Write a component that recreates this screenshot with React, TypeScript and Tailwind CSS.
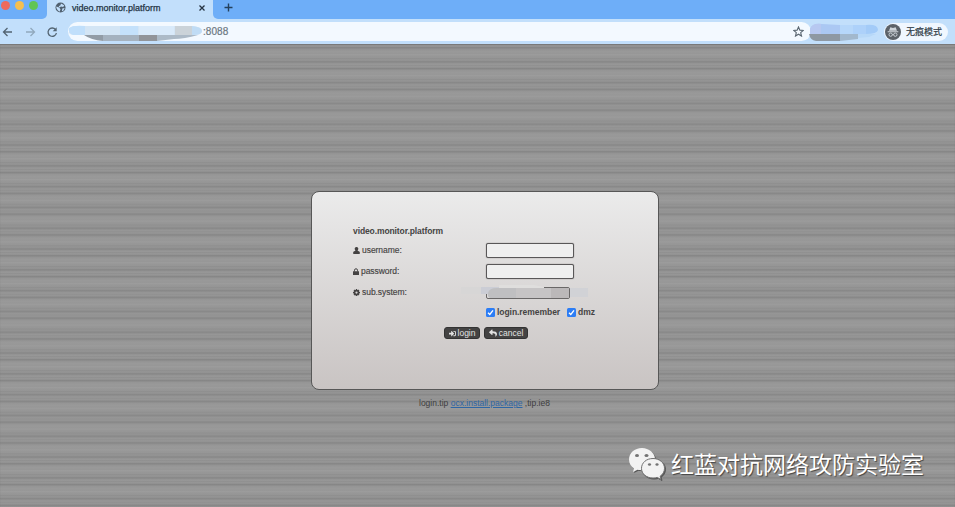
import React from 'react';
import { FaSignInAlt, FaReply } from 'react-icons/fa';

const brushed =
  'bg-[repeating-linear-gradient(180deg,#8b8b8b_0px,#949494_1px,#979797_2px,#909090_3px,#969696_4px,#929292_5px,#868686_6px,#8d8d8d_7px,#959595_8px,#999999_10px,#979797_12px,#9c9c9c_13px,#979797_14.5px,#969696_16px,#8f8f8f_17px,#949494_18px,#929292_19px,#888888_20px,#8b8b8b_20.8px)]';

function BrowserChrome() {
  return (
    <header className="h-[44px] bg-[#c2dffb]">
      <div className="flex h-[19px] bg-[#6eaef8]">
        <div className="flex w-[47px] items-start bg-[#c2dffb]">
          <div className="flex h-[19px] w-full gap-[5px] rounded-br-[5px] bg-[#6eaef8] pt-[1px] pl-[1px]">
            <i className="size-[9px] rounded-full bg-[#ed6a5e]" />
            <i className="size-[9px] rounded-full bg-[#f5bf4f]" />
            <i className="size-[9px] rounded-full bg-[#61c554]" />
          </div>
        </div>
        <div className="flex w-[166px] items-center bg-[#c2dffb] pl-[8px] pb-[4px]">
          <svg className="size-[11px] shrink-0" viewBox="0 0 24 24">
            <circle cx="12" cy="12" r="11" fill="#50606f" />
            <path d="M3 10l6 2 3 4-2 5-4-3-3-5zM13 3l7 4-2 4-5-1-3 2-2-3 4-2zM16 14l5-1-3 6-3 1z" fill="#c2dffb" />
          </svg>
          <span className="ml-[6px] w-[127px] text-[9px] leading-[12px] whitespace-nowrap text-[#243444] [-webkit-text-stroke:0.25px_#243444]">video.monitor.platform</span>
          <svg className="size-[6px] shrink-0" viewBox="0 0 6 6"><path d="M.5 .5l5 5M5.500 .5l-5 5" stroke="#263442" strokeWidth="1.300" /></svg>
        </div>
        <div className="flex flex-1 bg-[#c2dffb]">
          <div className="flex-1 rounded-bl-[5px] bg-[#6eaef8] pt-[3px] pl-[11px]">
            <svg className="size-[9px]" viewBox="0 0 9 9"><path d="M4.500 .5v8M.5 4.500h8" stroke="#24405c" strokeWidth="1.400" /></svg>
          </div>
        </div>
      </div>
      <div className="flex h-[25px] items-center">
        <svg className="h-[12px] w-[62px] shrink-0" viewBox="0 0 62 12" fill="none" strokeWidth="1.300">
          <path d="M12 6H3.500M7.500 2l-4 4 4 4" stroke="#536472" />
          <path d="M26 6h8.500M30.500 2l4 4-4 4" stroke="#91a9bd" />
          <path d="M55.500 3.500A4.200 4.200 0 1 0 56.400 7" stroke="#536472" />
          <path d="M56.700 1.200v4h-4z" fill="#536472" />
        </svg>
        <div className="ml-[6px] flex h-[19px] w-[743px] items-center rounded-full bg-[#f3f9ff]">
          <svg className="h-[19px] w-[135px] shrink-0" viewBox="0 0 135 19">
            <path d="M5 4H121Q134 4 134 9T123 13H5Q0 12 1 9T5 4" fill="#d3e5f5" />
            <path d="M52 4h18v9H52z" fill="#c4e1fb" />
            <path d="M71 4h35v9H71z" fill="#d9eafa" />
            <path d="M107 4h17v9h-17z" fill="#cbd3d9" />
            <path d="M124 4q10 1 10 5t-10 4z" fill="#c0dcf5" />
            <path d="M1 6q4-3 16-2v9H5Q0 11 1 6z" fill="#c0dffb" />
            <path d="M16 13h19v6Q23 18 16 13z" fill="#929ca6" />
            <path d="M35 13h36v6H35z" fill="#a5b2bf" />
            <path d="M71 13h18v6H71z" fill="#919499" />
            <path d="M89 13h41q-14 4-24 4l-17 2z" fill="#acbac7" />
          </svg>
          <span className="w-[590px] text-[10px] leading-[12px] tracking-[0.05px] text-[#6b7781] [-webkit-text-stroke:0.2px_#6b7781]">:8088</span>
          <svg className="size-[11px]" viewBox="0 0 24 24" fill="none" stroke="#5b6772" strokeWidth="2.400"><path d="M12 2l3 7 7.500.6-5.700 5 1.800 7.400-6.600-4-6.600 4 1.800-7.400-5.700-5L9 9z" /></svg>
        </div>
        <svg className="-ml-[2px] h-[19px] w-[72px] shrink-0" viewBox="0 0 72 19">
          <path d="M1 7q2-6 12-5l18 1v9H1z" fill="#abc8f3" />
          <path d="M1 7q2-6 11-5v10H1z" fill="#b7c8f1" />
          <path d="M31 3h13v9H31z" fill="#b6d7fa" />
          <path d="M44 3h13v9H44z" fill="#add1fa" />
          <path d="M57 3q12-1 12 5-1 4-12 4z" fill="#a3cbf8" />
          <path d="M0 12h31v7H7q-6-1-7-7" fill="#8e98a3" />
          <path d="M31 12h18v5l-18 2z" fill="#a2b8cd" />
          <path d="M49 12h18l-7 3-11 1z" fill="#b7d8f8" />
        </svg>
        <div className="ml-[3px] flex h-[18px] w-[64px] shrink-0 items-center rounded-full bg-[#f0f7ff] pl-[1px]">
          <svg className="size-[16px] shrink-0" viewBox="0 0 24 24">
            <circle cx="12" cy="12" r="12" fill="#5c6269" />
            <path d="M8 5l4 1 4-1 2 5H6zM4 11h16v1.500H4z" fill="#cfd5da" />
            <g fill="none" stroke="#cfd5da" strokeWidth="1.400"><circle cx="8.500" cy="16" r="2.500" /><circle cx="15.500" cy="16" r="2.500" /><path d="M11 16h2" /></g>
          </svg>
          <span className="ml-[5px] text-[9px] leading-[12px] whitespace-nowrap text-[#303b46] [-webkit-text-stroke:0.2px_#303b46]">无痕模式</span>
        </div>
      </div>
    </header>
  );
}

function Check({ label }: { label: string }) {
  return (
    <label className="flex items-center gap-[2px] text-[8.500px] font-bold tracking-[-0.05px] text-[#454343]">
      <svg className="size-[9px]" viewBox="0 0 9 9"><rect width="9" height="9" rx="1.500" fill="#2c7df5" /><path d="M2 4.700l1.800 1.800L7 2.400" fill="none" stroke="#fff" strokeWidth="1.300" /></svg>
      <span>{label}</span>
    </label>
  );
}

function LoginPanel() {
  const input = 'h-[15px] w-[88px] rounded-[2px] border border-[#595758] bg-[#efefef] shadow-[0_0_1px_#595758] outline-none';
  const label = 'flex w-[133px] items-center gap-[2px] text-[8.500px] tracking-[-0.05px] text-[#454343] [-webkit-text-stroke:0.15px_#454343]';
  return (
    <form className="mt-[147px] ml-[311px] h-[199px] w-[348px] rounded-[8px] border border-[#575757] bg-linear-to-b from-[#ebebeb] to-[#c9c4c3] pt-[34px] pl-[41px]">
      <h1 className="h-[14px] text-[8.500px] leading-[11px] font-bold tracking-[-0.1px] text-[#454343]">video.monitor.platform</h1>
      <div className="flex h-[21px] items-center">
        <label className={label}>
          <svg className="size-[7px]" viewBox="0 0 14 14" fill="currentColor"><path d="M7 0a3.500 3.500 0 0 1 3 5.500Q9.500 7 9 7.500q5 1 5 4.500 0 2-2 2H2q-2 0-2-2 0-3.500 5-4.500-.5-.5-1-2A3.500 3.500 0 0 1 7 0z" /></svg>
          username:
        </label>
        <input className={input} />
      </div>
      <div className="flex h-[21px] items-center">
        <label className={label}>
          <svg className="h-[7px] w-[6px]" viewBox="0 0 12 14" fill="currentColor"><path d="M0 6.500h12V14H0z" /><path d="M3 7V4.500a3 3 0 0 1 6 0V7" fill="none" stroke="currentColor" strokeWidth="2" /></svg>
          password:
        </label>
        <input type="password" className={input} />
      </div>
      <div className="flex h-[20px] items-center">
        <label className="flex w-[103px] items-center gap-[2px] text-[8.500px] tracking-[-0.05px] text-[#454343] [-webkit-text-stroke:0.15px_#454343]">
          <svg className="size-[7px]" viewBox="0 0 14 14" fill="none" stroke="currentColor"><circle cx="7" cy="7" r="4" strokeWidth="3.500" /><path d="M7 0v2M7 12v2M0 7h2M12 7h2M2 2l2 2M10 10l2 2M2 12l2-2M10 4l2-2" strokeWidth="2.500" /></svg>
          sub.system:
        </label>
        <svg className="h-[17px] w-[140px]" viewBox="0 0 140 17">
          <rect x="30.500" y="3.500" width="83" height="11" rx="1.500" fill="#dedcdc" stroke="#696767" />
          <path d="M5 3h20v7H5z" fill="#d7d6d6" />
          <path d="M25 3h19v7H25z" fill="#cbcdd5" />
          <path d="M43 1h35l10 2v2H43z" fill="#dfdedd" />
          <path d="M32 9q1-5 9-5h19v10H34q-3-1-2-5z" fill="#bfbfc1" />
          <path d="M60 4h35v10H60z" fill="#c6c4c5" />
          <path d="M95 4h18v10H95z" fill="#bbb8b9" />
          <path d="M114 4h18v9h-18z" fill="#d1d2d6" />
        </svg>
      </div>
      <div className="ml-[133px] flex h-[20px] items-center gap-[7px]">
        <Check label="login.remember" /><Check label="dmz" />
      </div>
      <div className="ml-[91px] flex h-[22px] items-center gap-[4px] text-[8.500px] leading-[12px] text-[#e2e2e2]">
        <button type="button" className="flex h-[12px] w-[36px] items-center justify-center gap-[2px] rounded-[3px] border border-[#333] bg-[#444343]"><FaSignInAlt className="size-[7px]" />login</button>
        <button type="button" className="flex h-[12px] w-[44px] items-center justify-center gap-[2px] rounded-[3px] border border-[#333] bg-[#444343]"><FaReply className="size-[8px]" />cancel</button>
      </div>
    </form>
  );
}

function Watermark() {
  return (
    <div className="mt-[37px] ml-[628px] flex h-[36px] items-center gap-[5px] text-white">
      <svg className="h-[34px] w-[38px] shrink-0 drop-shadow-[1px_1px_0px_#555]" viewBox="0 0 38 34">
        <path d="M14 1C6.500 1 1 6 1 12.500c0 4 2 7 5 9L5 25l4.500-2.200c2 .5 3 .6 5 .6C21 23 27 18 27 12S21 1 14 1z" fill="#f2f2f2" />
        <path d="M25 11.500c-6.500 0-11.500 4.200-11.500 9.800S18.500 31 25 31c1.500 0 3-.2 4.300-.6L33 32.500l-.9-3.200c2.600-1.800 4.400-4.500 4.400-8 0-5.600-5-9.800-11.500-9.800z" fill="#f2f2f2" stroke="#707070" strokeWidth="1" />
        <g fill="#737373"><ellipse cx="9" cy="8.500" rx="2" ry="1.500" /><ellipse cx="18.500" cy="8.500" rx="2" ry="1.500" /><ellipse cx="21.500" cy="17.500" rx="1.600" ry="1.300" /><ellipse cx="29" cy="17.500" rx="1.600" ry="1.300" /></g>
      </svg>
      <span className="pt-[2px] text-[23px] leading-[34px] whitespace-nowrap [text-shadow:1px_1px_1px_#444]">红蓝对抗网络攻防实验室</span>
    </div>
  );
}

export default function App() {
  return (
    <div className={`h-[507px] w-[955px] overflow-hidden font-['Liberation_Sans','Noto_Sans_CJK_SC',sans-serif] ${brushed}`}>
      <BrowserChrome />
      <main className="flex h-[463px] flex-col shadow-[inset_0_1px_1px_#777]">
        <LoginPanel />
        <p className="mt-[7px] ml-[419px] text-[8.500px] leading-[12px] whitespace-nowrap text-[#3e3e3e]">login.tip <a className="text-[#2e66a5] underline">ocx.install.package</a> ,tip.ie8</p>
        <Watermark />
      </main>
    </div>
  );
}
